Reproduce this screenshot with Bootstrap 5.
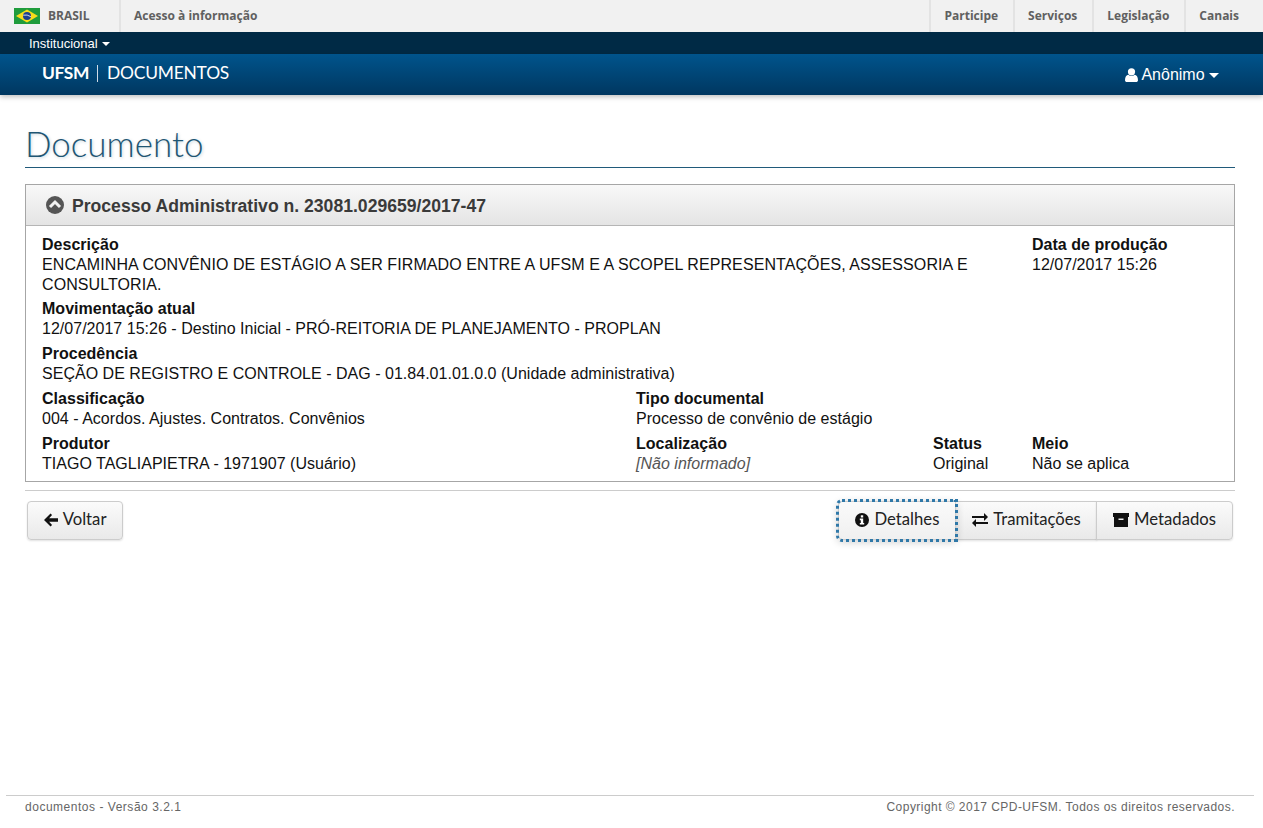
<!DOCTYPE html>
<html lang="pt-BR">
<head>
<meta charset="utf-8">
<title>Documento</title>
<link href="https://cdn.jsdelivr.net/npm/bootstrap@5.3.0/dist/css/bootstrap.min.css" rel="stylesheet">
<style>
html,body{height:100%}
body{font-family:"Liberation Sans",Arial,sans-serif;font-size:16px;line-height:20px;color:#111;background:#fff;min-height:828px}
.gov-bar{height:32px;background:#f1f1f1;font-family:"Open Sans",sans-serif;font-weight:700;font-size:12px;color:#606060}
.gov-item{padding:0 15px 0 13px;border-left:2px solid #e3e3e3;line-height:32px;height:32px;white-space:nowrap}
.gov-first{width:119px;padding-left:14px;line-height:32px}
.inst-bar{height:22px;background:#002a45;color:#fff;font-size:13px;line-height:23px;padding-left:29px}
.main-bar{height:41px;background:linear-gradient(#00548c,#003760);color:#fff;padding:0 44px 0 42px;box-shadow:0 2px 5px rgba(0,0,0,.25)}
.brand-name{font-family:"Lato",sans-serif;font-size:17.4px;letter-spacing:-.2px;margin-top:-4px}
.brand-name b{letter-spacing:-.4px}
.brand-sep{display:inline-block;width:1px;height:17px;background:#cfdbe6;margin:0 9px 0 8px;vertical-align:-3px}
.caret-down{display:inline-block;width:0;height:0;border-left:5px solid transparent;border-right:5px solid transparent;border-top:5px solid currentColor;vertical-align:2px}
.inst-bar .caret-down{border-left-width:4px;border-right-width:4px;border-top-width:4px;margin-left:1px}
.user-menu{font-size:16px}
.page-wrap{padding:0 28px 0 25px}
.page-title{font-family:"Lato",sans-serif;font-weight:300;font-size:35px;line-height:44px;color:#1f5673;margin:26px 0 0;padding-bottom:2px;border-bottom:1px solid #205a7a;text-shadow:1px 1px 3px rgba(32,90,122,.25);width:1210px}
.doc-panel{width:1210px;margin-top:16px;border:1px solid #a6a6a6}
.doc-head{height:41px;background:linear-gradient(#f8f8f8,#e4e4e4);border-bottom:1px solid #b5b5b5;padding-left:20px;font-size:17.6px;font-weight:700;color:#3a3a3a}
.doc-head span{padding-top:2px}
.doc-body{padding:9px 4px 7px 16px;color:#111;letter-spacing:.02px}
.desc-text{letter-spacing:.085px}
.doc-row{margin-bottom:5px}
.doc-row.first-row{margin-bottom:4px}
.doc-row:last-child{margin-bottom:0}
.doc-row>div{padding:0}
.not-informed{color:#555;font-style:italic}
.rule-line{width:1210px;border-top:1px solid #ccc;margin-top:8px}
.action-row{width:1206px;margin:10px 0 0 2px}
.act-btn{font-family:"Lato",sans-serif;font-size:16.7px;line-height:24px;height:39px;padding:4px 16px 8px;color:#222;background:linear-gradient(#fbfbfb,#e9e9e9);border:1px solid #ccc;border-radius:4px;box-shadow:0 1px 2px rgba(0,0,0,.12)}
.act-btn svg{margin-right:1px}
.act-btn:hover{color:#222;border-color:#ccc}
.act-focus{outline:3px dotted #2f78a8;outline-offset:-1px;position:relative;z-index:2;background:linear-gradient(#fafafa,#f0f0f0);box-shadow:0 2px 8px rgba(0,0,0,.2)}
.act-mid{padding-right:15px}
.site-foot{margin:auto 9px 0 6px;border-top:1px solid #ccc;height:33px;padding:0 19px;font-size:12px;line-height:22px;color:#666}
.foot-left{letter-spacing:.52px}
.foot-right{letter-spacing:.46px}
svg{vertical-align:-2px}
</style>
</head>
<body class="d-flex flex-column">
<div class="gov-bar d-flex">
  <div class="gov-first d-flex align-items-center gap-2">
    <svg width="26" height="16" viewBox="0 0 26 16"><rect width="26" height="16" fill="#1f9c3c"/><polygon points="13,1.500 24,8 13,14.500 2,8" fill="#f7dc1a"/><circle cx="13" cy="8" r="4" fill="#1c3f8f"/><path d="M9.200 7.200q4-1 7.700 1.500" stroke="#fff" stroke-width=".8" fill="none"/></svg>
    <span>BRASIL</span>
  </div>
  <div class="gov-item">Acesso à informação</div>
  <div class="gov-item ms-auto">Participe</div>
  <div class="gov-item">Serviços</div>
  <div class="gov-item">Legislação</div>
  <div class="gov-item pe-4">Canais</div>
</div>
<div class="inst-bar">Institucional <span class="caret-down"></span></div>
<div class="main-bar d-flex align-items-center justify-content-between">
  <div class="brand-name"><b>UFSM</b><span class="brand-sep"></span>DOCUMENTOS</div>
  <div class="user-menu"><svg width="13" height="14" viewBox="0 0 13 14" fill="#fff"><circle cx="6.500" cy="3.800" r="3.600"/><path d="M0 12.200C0 8.800 1.500 7 3.300 6.700 4.200 7.500 5.300 7.900 6.500 7.900s2.300-.4 3.200-1.200C11.500 7 13 8.800 13 12.200 13 13.300 12.200 14 11 14H2C.8 14 0 13.300 0 12.200z"/></svg> Anônimo <span class="caret-down"></span></div>
</div>
<main class="page-wrap">
  <h1 class="page-title">Documento</h1>
  <section class="doc-panel">
    <div class="doc-head d-flex align-items-center gap-2">
      <svg width="18" height="18" viewBox="0 0 18 18"><circle cx="9" cy="9" r="9" fill="#555"/><path d="M4 11 9 6l5 5" fill="none" stroke="#f2f2f2" stroke-width="3"/></svg>
      <span>Processo Administrativo n. 23081.029659/2017-47</span>
    </div>
    <div class="doc-body">
      <div class="row g-0 doc-row first-row">
        <div class="col-10"><b>Descrição</b><br><span class="desc-text">ENCAMINHA CONVÊNIO DE ESTÁGIO A SER FIRMADO ENTRE A UFSM E A SCOPEL REPRESENTAÇÕES, ASSESSORIA E CONSULTORIA.</span></div>
        <div class="col-2"><b>Data de produção</b><br>12/07/2017 15:26</div>
      </div>
      <div class="row g-0 doc-row">
        <div class="col-12"><b>Movimentação atual</b><br>12/07/2017 15:26 - Destino Inicial - PRÓ-REITORIA DE PLANEJAMENTO - PROPLAN</div>
      </div>
      <div class="row g-0 doc-row">
        <div class="col-12"><b>Procedência</b><br>SEÇÃO DE REGISTRO E CONTROLE - DAG - 01.84.01.01.0.0 (Unidade administrativa)</div>
      </div>
      <div class="row g-0 doc-row">
        <div class="col-6"><b>Classificação</b><br>004 - Acordos. Ajustes. Contratos. Convênios</div>
        <div class="col-6"><b>Tipo documental</b><br>Processo de convênio de estágio</div>
      </div>
      <div class="row g-0 doc-row">
        <div class="col-6"><b>Produtor</b><br>TIAGO TAGLIAPIETRA - 1971907 (Usuário)</div>
        <div class="col-3"><b>Localização</b><br><span class="not-informed">[Não informado]</span></div>
        <div class="col-1"><b>Status</b><br>Original</div>
        <div class="col-2"><b>Meio</b><br>Não se aplica</div>
      </div>
    </div>
  </section>
  <div class="rule-line"></div>
  <div class="action-row d-flex justify-content-between">
    <button type="button" class="btn act-btn"><svg width="14" height="14" viewBox="0 0 15 14" fill="#111"><path d="M7 0l1.600 1.600L5.500 5H15v4H5.500l3.100 3.400L7 14 0 7z"/></svg> Voltar</button>
    <div class="btn-group">
      <button type="button" class="btn act-btn act-focus"><svg width="14" height="14" viewBox="0 0 14 14"><circle cx="7" cy="7" r="7" fill="#111"/><rect x="5.800" y="2.300" width="2.400" height="2.200" fill="#fff"/><path d="M4.800 5.600h3.400v4.400h1v1.600H4.800V10h1V7.200h-1z" fill="#fff"/></svg> Detalhes</button>
      <button type="button" class="btn act-btn act-mid"><svg width="16" height="14" viewBox="0 0 16 14" fill="#111"><path d="M0 3h12V0l4 4-4 4V5H0zM16 9H4V6L0 10l4 4v-3h12z"/></svg> Tramitações</button>
      <button type="button" class="btn act-btn"><svg width="16" height="14" viewBox="0 0 16 14" fill="#111"><path d="M0 0h16v4H0zM1 4h14v10H1z"/><rect x="5.500" y="5.500" width="5" height="1.500" fill="#eee"/></svg> Metadados</button>
    </div>
  </div>
</main>
<footer class="site-foot d-flex justify-content-between">
  <span class="foot-left">documentos - Versão 3.2.1</span>
  <span class="foot-right">Copyright © 2017 CPD-UFSM. Todos os direitos reservados.</span>
</footer>
<script src="https://cdn.jsdelivr.net/npm/bootstrap@5.3.0/dist/js/bootstrap.bundle.min.js"></script>
</body>
</html>
